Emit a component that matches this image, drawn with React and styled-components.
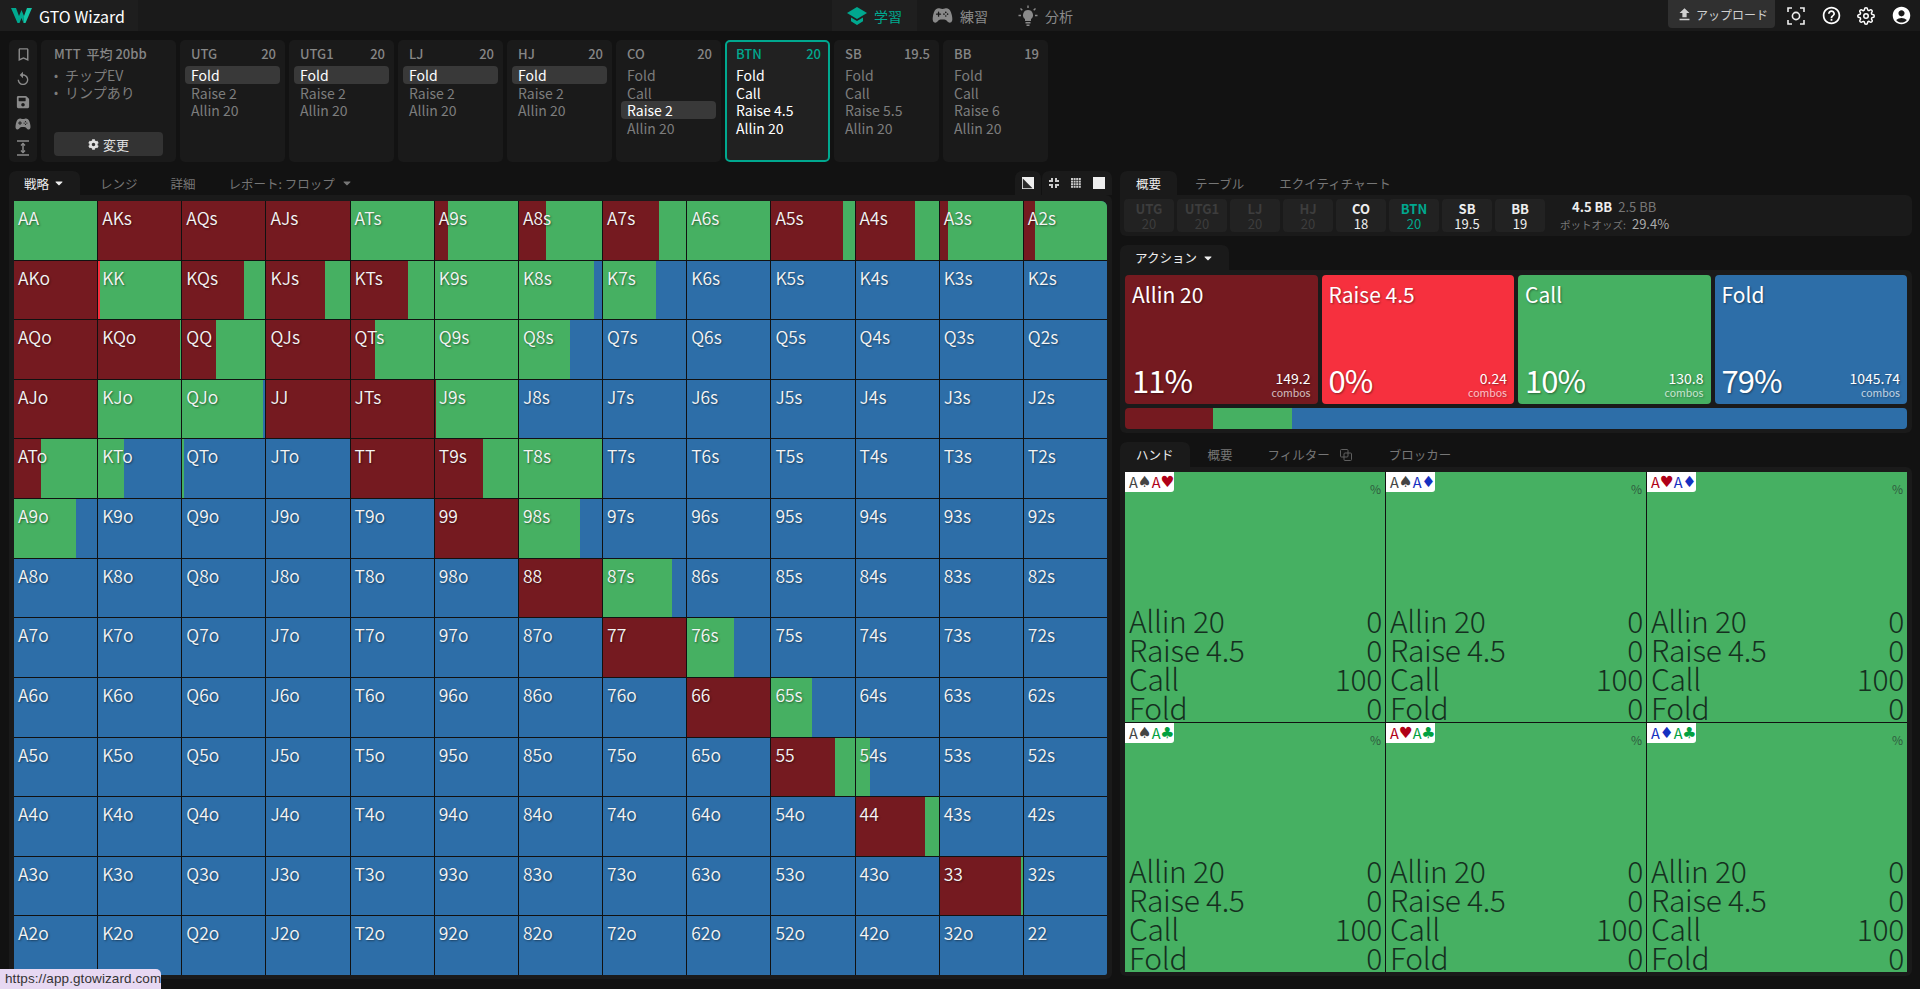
import React from 'react';
import styled, { createGlobalStyle } from 'styled-components';
import { FaCog, FaSave, FaCaretDown } from 'react-icons/fa';
import { IoGameController } from 'react-icons/io5';
import { MdAccountCircle, MdFileUpload, MdHelpOutline, MdReplay, MdOutlineBookmarkBorder } from 'react-icons/md';
import { FiSettings } from 'react-icons/fi';

const FONT = '"Noto Sans CJK JP", "Noto Sans", sans-serif';
const TEAL = '#00a88f';
const ALLIN = '#751a20';
const RAISE = '#f6303e';
const CALL = '#46b062';
const FOLD = '#2d6ea8';

const GlobalStyle = createGlobalStyle`
  html, body {
    margin: 0;
    background: #121212;
    font-family: ${FONT};
    overflow: hidden;
  }
  * {
    box-sizing: border-box;
  }
`

const Page = styled.div`
  height: 989px;
  width: 1920px;
  position: relative;
  overflow: hidden;
  color: #fff;
`

const TopBar = styled.header`
  align-items: stretch;
  background: #1a1a1a;
  display: grid;
  grid-template-columns: 1fr auto 1fr;
  height: 31px;
`

const LogoTab = styled.div`
  align-items: center;
  background: #1e1e1e;
  display: flex;
  font-size: 16px;
  gap: 7px;
  padding-left: 11px;
  width: 138px;
`

const Nav = styled.nav`
  display: flex;
`

const NavItem = styled.div`
  align-items: center;
  background: ${p => (p.$active ? '#1f1f1f' : 'transparent')};
  color: ${p => (p.$active ? TEAL : '#8a8a8a')};
  display: flex;
  font-size: 14px;
  gap: 7px;
  padding: 0 15px;
  svg {
    font-size: 21px;
  }
`

const TopRight = styled.div`
  align-items: flex-start;
  display: flex;
  gap: 15.5px;
  justify-content: flex-end;
  padding-right: 8.5px;
  > svg {
    align-self: center;
    font-size: 18px;
  }
`

const UploadButton = styled.div`
  align-items: center;
  background: #303030;
  border-radius: 0 0 4px 4px;
  color: #cfcfcf;
  display: flex;
  font-size: 12px;
  gap: 3px;
  height: 28px;
  margin-right: -3.5px;
  padding: 0 8px;
  width: 107px;
  white-space: nowrap;
  svg {
    flex-shrink: 0;
  }
`

const SpotRow = styled.section`
  display: flex;
  gap: 4px;
  height: 122px;
  margin-top: 9px;
  padding-left: 9px;
`

const IconColumn = styled.div`
  align-items: center;
  background: #1a1a1a;
  border-radius: 5px;
  color: #8a8a8a;
  display: flex;
  flex-direction: column;
  font-size: 14px;
  justify-content: space-between;
  padding: 6px 0;
  width: 28px;
`

const SpotCard = styled.div`
  background: ${p => (p.$current ? '#212121' : '#1a1a1a')};
  border: ${p => (p.$current ? `2px solid ${TEAL}` : '2px solid transparent')};
  border-radius: 5px;
  padding: 2px 3px 0;
  width: ${p => p.$width || 105}px;
  display: flex;
  flex-direction: column;
`

const SpotHeader = styled.div`
  color: ${p => (p.$current ? TEAL : '#868686')};
  display: flex;
  font-size: 13px;
  font-weight: 500;
  height: 20px;
  justify-content: space-between;
  line-height: 20px;
  margin-bottom: 2px;
  padding: 0 4px 0 6px;
`

const SpotAction = styled.div`
  background: ${p => (p.$selected ? '#393939' : 'transparent')};
  border-radius: 4px;
  color: ${p => (p.$selected || p.$current ? '#fff' : '#7d7d7d')};
  font-size: 14px;
  height: 18px;
  line-height: 18px;
  padding-left: 6px;
  margin-bottom: -0.4px;
`

const InfoCard = styled(SpotCard)`
  padding: 2px 11px 4px 11px;
`

const InfoTitle = styled.div`
  color: #868686;
  font-size: 13px;
  font-weight: 500;
  height: 20px;
  line-height: 20px;
  margin-bottom: 2px;
  white-space: pre;
`

const InfoLine = styled.div`
  color: #7d7d7d;
  display: flex;
  font-size: 14px;
  gap: 7px;
  height: 17px;
  line-height: 18px;
  &::before {
    content: '•';
    font-size: 12px;
  }
`

const ChangeButton = styled.div`
  align-items: center;
  background: #333;
  border-radius: 4px;
  color: #e0e0e0;
  display: flex;
  font-size: 13px;
  gap: 4px;
  height: 24px;
  justify-content: center;
  margin-top: auto;
`

const Main = styled.main`
  display: flex;
  gap: 8px;
  margin-top: 9px;
  padding-left: 9px;
`

const LeftColumn = styled.div`
  display: flex;
  flex-direction: column;
  width: 1103px;
`

const RightColumn = styled.div`
  display: flex;
  flex-direction: column;
  width: 792px;
`

const TabRow = styled.div`
  align-items: stretch;
  display: flex;
  height: ${p => p.$height || 24}px;
  flex-shrink: 0;
`

const Tab = styled.div`
  align-items: center;
  background: ${p => (p.$active ? '#1a1a1a' : 'transparent')};
  border-radius: 7px 7px 0 0;
  color: ${p => (p.$active ? '#eee' : '#767676')};
  display: flex;
  font-size: 12.5px;
  gap: ${p => p.$gap || 5}px;
  padding: 0 ${p => p.$pad || 15}px;
  svg {
    font-size: 12px;
  }
`

const ViewTools = styled.div`
  display: flex;
  gap: 1px;
  margin-left: auto;
`

const ToolGroup = styled.div`
  align-items: center;
  background: #1a1a1a;
  border-radius: 7px 7px 0 0;
  display: flex;
  gap: 12px;
  padding: 0 7px;
`

const Panel = styled.div`
  background: #1a1a1a;
  border-radius: 0 6px 6px 6px;
  padding: ${p => p.$pad || '5px'};
  margin-bottom: ${p => p.$gap || 0}px;
`

const RangeGrid = styled.div`
  background: #111;
  display: grid;
  gap: 1px;
  grid-template-columns: repeat(13, 1fr);
  grid-template-rows: repeat(13, 1fr);
  height: 774px;
  border-radius: 0 6px 2px 2px;
  overflow: hidden;
`

const Cell = styled.div`
  background: ${FOLD};
  display: flex;
  overflow: hidden;
  position: relative;
`

const Segment = styled.div`
  background: ${p => p.$color};
  height: 100%;
`

const CellLabel = styled.span`
  color: #f4f4f4;
  font-size: 17.5px;
  font-weight: 350;
  left: 4px;
  line-height: 22px;
  position: absolute;
  text-shadow: 1px 1px 2px rgba(0, 0, 0, 0.45);
  top: 6px;
`

const PositionRow = styled.div`
  align-items: center;
  display: flex;
  gap: 3px;
`

const PositionChip = styled.div`
  align-items: center;
  background: #222;
  border-radius: 4px;
  color: ${p => (p.$current ? TEAL : p.$dim ? '#3d3d3d' : '#eee')};
  display: flex;
  flex-direction: column;
  font-size: 13px;
  height: 33px;
  justify-content: center;
  line-height: 15px;
  width: 50px;
  b {
    font-weight: 700;
  }
`

const PotInfo = styled.div`
  display: flex;
  flex-direction: column;
  font-size: 13px;
  line-height: 15px;
  margin-left: 12px;
  gap: 2px;
`

const PotLine = styled.div`
  align-items: baseline;
  display: flex;
  gap: 6px;
  padding-left: ${p => p.$indent || 0}px;
  color: ${p => p.$color || '#eee'};
`

const PotMuted = styled.span`
  color: #777;
`

const PotLabel = styled.span`
  color: #777;
  font-size: 10.5px;
`

const ActionCards = styled.div`
  display: grid;
  gap: 4px;
  grid-template-columns: repeat(4, 1fr);
`

const ActionCard = styled.div`
  background: ${p => p.$color};
  border-radius: 4px;
  display: flex;
  flex-direction: column;
  height: 129px;
  justify-content: space-between;
  padding: 2px 7px 4px 7px;
  text-shadow: 1px 1px 2px rgba(0, 0, 0, 0.4);
`

const ActionTitle = styled.div`
  font-size: 21px;
  line-height: 34px;
`

const ActionBottom = styled.div`
  align-items: flex-end;
  display: flex;
  justify-content: space-between;
`

const ActionPercent = styled.div`
  font-size: 31px;
  letter-spacing: -1px;
  line-height: 40px;
`

const ActionCombos = styled.div`
  font-size: 14px;
  line-height: 15px;
  text-align: right;
  small {
    display: block;
    font-size: 10.5px;
    opacity: 0.7;
    line-height: 14px;
  }
`

const StackBar = styled.div`
  border-radius: 4px;
  display: flex;
  height: 21px;
  margin-top: 4px;
  overflow: hidden;
`

const HandGrid = styled.div`
  background: #111;
  display: grid;
  gap: 1px;
  grid-template-columns: repeat(3, 1fr);
  grid-template-rows: repeat(2, 1fr);
  height: 500px;
`

const HandCell = styled.div`
  background: ${CALL};
  color: #15301f;
  display: flex;
  flex-direction: column;
  justify-content: flex-end;
  padding: 0 3px 0 4px;
  position: relative;
`

const HandBadge = styled.div`
  background: #fff;
  border-radius: 0 0 3px 0;
  display: flex;
  font-size: 14.5px;
  height: 20px;
  left: 0;
  line-height: 20px;
  padding-left: 4px;
  position: absolute;
  top: 0;
  width: 49px;
`

const CardRank = styled.span`
  color: ${p => p.$color};
`

const CardSuit = styled.span`
  color: ${p => p.$color};
  font-family: "DejaVu Sans", sans-serif;
  font-size: 15.5px;
`

const PercentMark = styled.span`
  color: #2f5a3e;
  font-size: 12px;
  position: absolute;
  right: 4px;
  top: 8px;
`

const StatRow = styled.div`
  display: flex;
  font-size: 30px;
  font-weight: 300;
  height: 29px;
  justify-content: space-between;
  letter-spacing: -0.3px;
  line-height: 29px;
`

const StatusTip = styled.div`
  background: #e7d8f2;
  border-radius: 0 5px 0 0;
  bottom: 0;
  color: #333;
  font-family: "Liberation Sans", sans-serif;
  font-size: 13.5px;
  height: 20px;
  left: 0;
  letter-spacing: 0.1px;
  line-height: 20px;
  padding-left: 5px;
  position: absolute;
  width: 161px;
`

// mix = allin, raise, call, fold
const COLORS = [ALLIN, RAISE, CALL, FOLD];
const RANKS = ['A', 'K', 'Q', 'J', 'T', '9', '8', '7', '6', '5', '4', '3', '2'];

const MIXES = {
  AA: [0, 0, 100, 0], AKs: [100], AQs: [100], AJs: [100], ATs: [1, 0, 99, 0], A9s: [16, 0, 84, 0],
  A8s: [33, 0, 67, 0], A7s: [67, 0, 33, 0], A6s: [0, 0, 100, 0], A5s: [86, 0, 14, 0], A4s: [72, 0, 28, 0],
  A3s: [10, 0, 90, 0], A2s: [14, 0, 86, 0],
  AKo: [100], KK: [0, 2, 98, 0], KQs: [74, 0, 26, 0], KJs: [70, 0, 30, 0], KTs: [69, 0, 31, 0], K9s: [0, 0, 100, 0],
  K8s: [0, 0, 90, 10], K7s: [0, 0, 64, 36],
  AQo: [100], KQo: [98, 0, 2, 0], QQ: [41, 0, 59, 0], QJs: [100], QTs: [29, 0, 71, 0], Q9s: [0, 0, 100, 0], Q8s: [0, 0, 62, 38],
  AJo: [100], KJo: [0, 0, 100, 0], QJo: [0, 0, 97, 3], JJ: [100], JTs: [100], J9s: [2, 0, 98, 0],
  ATo: [32, 0, 68, 0], KTo: [0, 0, 31, 69], QTo: [0, 0, 2, 98], TT: [100], T9s: [58, 0, 42, 0], T8s: [0, 0, 100, 0],
  A9o: [0, 0, 74, 26], 99: [100], '98s': [0, 0, 74, 26],
  88: [100], '87s': [0, 0, 83, 17],
  77: [100], '76s': [0, 0, 56, 44],
  66: [100], '65s': [0, 0, 49, 51],
  55: [77, 0, 23, 0], '54s': [0, 0, 18, 82],
  44: [84, 0, 16, 0],
  33: [98, 0, 2, 0],
};

const handName = (row, col) => {
  if (row === col) return RANKS[row] + RANKS[col];
  return row < col ? RANKS[row] + RANKS[col] + 's' : RANKS[col] + RANKS[row] + 'o';
};

const SPOTS = [
  { pos: 'UTG', stack: '20', actions: ['Fold', 'Raise 2', 'Allin 20'], selected: 0 },
  { pos: 'UTG1', stack: '20', actions: ['Fold', 'Raise 2', 'Allin 20'], selected: 0 },
  { pos: 'LJ', stack: '20', actions: ['Fold', 'Raise 2', 'Allin 20'], selected: 0 },
  { pos: 'HJ', stack: '20', actions: ['Fold', 'Raise 2', 'Allin 20'], selected: 0 },
  { pos: 'CO', stack: '20', actions: ['Fold', 'Call', 'Raise 2', 'Allin 20'], selected: 2 },
  { pos: 'BTN', stack: '20', actions: ['Fold', 'Call', 'Raise 4.5', 'Allin 20'], current: true },
  { pos: 'SB', stack: '19.5', actions: ['Fold', 'Call', 'Raise 5.5', 'Allin 20'] },
  { pos: 'BB', stack: '19', actions: ['Fold', 'Call', 'Raise 6', 'Allin 20'] },
];

const POSITIONS = [
  { pos: 'UTG', stack: '20', dim: true },
  { pos: 'UTG1', stack: '20', dim: true },
  { pos: 'LJ', stack: '20', dim: true },
  { pos: 'HJ', stack: '20', dim: true },
  { pos: 'CO', stack: '18' },
  { pos: 'BTN', stack: '20', current: true },
  { pos: 'SB', stack: '19.5' },
  { pos: 'BB', stack: '19' },
];

const ACTIONS = [
  { title: 'Allin 20', pct: '11%', combos: '149.2', color: ALLIN },
  { title: 'Raise 4.5', pct: '0%', combos: '0.24', color: RAISE },
  { title: 'Call', pct: '10%', combos: '130.8', color: CALL },
  { title: 'Fold', pct: '79%', combos: '1045.74', color: FOLD },
];

const SUITS = {
  s: { glyph: '♠', color: '#444' },
  h: { glyph: '♥', color: '#b00018' },
  d: { glyph: '♦', color: '#1430c0' },
  c: { glyph: '♣', color: '#00a040' },
};

const HANDS = [['s', 'h'], ['s', 'd'], ['h', 'd'], ['s', 'c'], ['h', 'c'], ['d', 'c']];
const STATS = [['Allin 20', '0'], ['Raise 4.5', '0'], ['Call', '100'], ['Fold', '0']];

const Logo = () => (
  <svg width="21" height="15" viewBox="0 0 21 15">
    <path d="M0 0h5l3 8 2.5-6L13 8l-.5 7-2-5-2 5h-2z" fill={TEAL} />
    <path d="M16 0h5l-6.500 15h-2l.5-7z" fill="#14c4a6" />
  </svg>
);

const CapIcon = () => (
  <svg width="20" height="18" viewBox="0 0 20 18" fill={TEAL}>
    <path d="M10 0l10 6-10 6L0 6z" />
    <path d="M4 10.500l6 3.600 6-3.600v3.800L10 18l-6-3.700z" />
  </svg>
);

const BulbIcon = () => (
  <svg width="20" height="22" viewBox="0 0 20 22" fill="#8a8a8a">
    <path d="M10 5a5 5 0 0 0-3 9v2h6v-2a5 5 0 0 0-3-9zM7.500 17h5v1.500h-5zM8.500 19.500h3V21h-3z" />
    <path d="M10 0.500v2.500M2.500 3.500l1.800 1.800M17.500 3.500l-1.800 1.800M0.500 10.500H3M17 10.500h2.500" stroke="#8a8a8a" strokeWidth="1.400" />
  </svg>
);

const FocusIcon = () => (
  <svg width="18" height="18" viewBox="0 0 18 18" fill="none" stroke="#eee" strokeWidth="1.600">
    <path d="M1 5V1h4M13 1h4v4M17 13v4h-4M5 17H1v-4" />
    <circle cx="9" cy="9" r="3.600" />
  </svg>
);

const HeightIcon = () => (
  <svg width="14" height="16" viewBox="0 0 14 16" fill="none" stroke="#8a8a8a" strokeWidth="1.500">
    <path d="M1 1h12M1 15h12M7 3.500v9" />
    <path d="M5 5.500l2-2 2 2M5 10.500l2 2 2-2" />
  </svg>
);

const HalfIcon = () => (
  <svg width="12" height="12" viewBox="0 0 12 12">
    <rect width="12" height="12" fill="#eee" />
    <path d="M0.800 1.500v9.700h9.700z" fill="#2a2a2a" />
  </svg>
);

const CornerDotsIcon = () => (
  <svg width="10" height="10" viewBox="0 0 10 10" fill="#ccc">
    <path d="M0 2h2V0h2v4H0zM6 0h2v2h2v2H6zM0 6h4v4H2V8H0zM6 6h4v2H8v2H6z" />
  </svg>
);

const DotsIcon = () => (
  <svg width="10" height="10" viewBox="0 0 10 10" fill="#ccc">
    {[0, 1, 2, 3].map(r => [0, 1, 2, 3].map(c => (
      <rect key={`${r}${c}`} x={c * 2.600} y={r * 2.600} width="2" height="2" />
    )))}
  </svg>
);

const SquareIcon = () => (
  <svg width="12" height="12" viewBox="0 0 12 12">
    <rect width="12" height="12" fill="#eee" />
  </svg>
);

const CopyIcon = () => (
  <svg width="12" height="12" viewBox="0 0 12 12" fill="none" stroke="#5f5f5f" strokeWidth="1">
    <rect x="0.500" y="0.500" width="7.500" height="7.500" rx="1" />
    <rect x="4" y="4" width="7.500" height="7.500" rx="1" />
  </svg>
);

const Spot = ({ spot }) => (
  <SpotCard $current={spot.current}>
    <SpotHeader $current={spot.current}>
      <span>{spot.pos}</span>
      <span>{spot.stack}</span>
    </SpotHeader>
    {spot.actions.map((action, i) => (
      <SpotAction key={action} $selected={spot.selected === i} $current={spot.current}>{action}</SpotAction>
    ))}
  </SpotCard>
);

const Hand = ({ suits }) => (
  <HandCell>
    <HandBadge>
      {suits.map(s => (
        <React.Fragment key={s}>
          <CardRank $color={SUITS[s].color}>A</CardRank>
          <CardSuit $color={SUITS[s].color}>{SUITS[s].glyph}</CardSuit>
        </React.Fragment>
      ))}
    </HandBadge>
    <PercentMark>%</PercentMark>
    {STATS.map(([label, value]) => (
      <StatRow key={label}>
        <span>{label}</span>
        <span>{value}</span>
      </StatRow>
    ))}
  </HandCell>
);

const App = () => (
  <Page>
    <GlobalStyle />
    <TopBar>
      <LogoTab><Logo /> GTO Wizard</LogoTab>
      <Nav>
        <NavItem $active><CapIcon /> 学習</NavItem>
        <NavItem><IoGameController /> 練習</NavItem>
        <NavItem><BulbIcon /> 分析</NavItem>
      </Nav>
      <TopRight>
        <UploadButton><MdFileUpload size={17} /> アップロード</UploadButton>
        <FocusIcon />
        <MdHelpOutline style={{ fontSize: 21 }} />
        <FiSettings />
        <MdAccountCircle style={{ fontSize: 21 }} />
      </TopRight>
    </TopBar>

    <SpotRow>
      <IconColumn>
        <MdOutlineBookmarkBorder size={17} />
        <MdReplay size={16} />
        <FaSave />
        <IoGameController size={16} />
        <HeightIcon />
      </IconColumn>
      <InfoCard $width={135}>
        <InfoTitle>MTT  平均 20bb</InfoTitle>
        <InfoLine>チップEV</InfoLine>
        <InfoLine>リンプあり</InfoLine>
        <ChangeButton><FaCog size={11} /> 変更</ChangeButton>
      </InfoCard>
      {SPOTS.map(spot => <Spot key={spot.pos} spot={spot} />)}
    </SpotRow>

    <Main>
      <LeftColumn>
        <TabRow>
          <Tab $active $gap={4}>戦略 <FaCaretDown /></Tab>
          <Tab $pad={20}>レンジ</Tab>
          <Tab $pad={13}>詳細</Tab>
          <Tab $pad={20} $gap={6}>レポート: フロップ <FaCaretDown /></Tab>
          <ViewTools>
            <ToolGroup><HalfIcon /></ToolGroup>
            <ToolGroup><CornerDotsIcon /><DotsIcon /><SquareIcon /></ToolGroup>
          </ViewTools>
        </TabRow>
        <Panel $pad="6px 5px 4px">
          <RangeGrid>
            {RANKS.map((_, row) => RANKS.map((__, col) => {
              const name = handName(row, col);
              const mix = MIXES[name] || [0, 0, 0, 100];
              return (
                <Cell key={name}>
                  {mix.map((pct, i) => (pct > 0 ? (
                    <Segment key={i} $color={COLORS[i]} style={{ width: `${pct}%` }} />
                  ) : null))}
                  <CellLabel>{name}</CellLabel>
                </Cell>
              );
            }))}
          </RangeGrid>
        </Panel>
      </LeftColumn>

      <RightColumn>
        <TabRow>
          <Tab $active $pad={16}>概要</Tab>
          <Tab $pad={18}>テーブル</Tab>
          <Tab $pad={17}>エクイティチャート</Tab>
        </TabRow>
        <Panel $pad="4px" $gap={9}>
          <PositionRow>
            {POSITIONS.map(p => (
              <PositionChip key={p.pos} $dim={p.dim} $current={p.current}>
                <b>{p.pos}</b>
                <span>{p.stack}</span>
              </PositionChip>
            ))}
            <PotInfo>
              <PotLine $indent={12}>
                <b>4.5 BB</b>
                <PotMuted>2.5 BB</PotMuted>
              </PotLine>
              <PotLine $color="#aaa">
                <PotLabel>ポットオッズ:</PotLabel>
                <span>29.4%</span>
              </PotLine>
            </PotInfo>
          </PositionRow>
        </Panel>

        <TabRow $height={25}>
          <Tab $active>アクション <FaCaretDown /></Tab>
        </TabRow>
        <Panel $pad="5px 5px 4px" $gap={9}>
          <ActionCards>
            {ACTIONS.map(a => (
              <ActionCard key={a.title} $color={a.color}>
                <ActionTitle>{a.title}</ActionTitle>
                <ActionBottom>
                  <ActionPercent>{a.pct}</ActionPercent>
                  <ActionCombos>{a.combos}<small>combos</small></ActionCombos>
                </ActionBottom>
              </ActionCard>
            ))}
          </ActionCards>
          <StackBar>
            <Segment $color={ALLIN} style={{ width: '11.3%' }} />
            <Segment $color={CALL} style={{ width: '10%' }} />
            <Segment $color={FOLD} style={{ width: '78.7%' }} />
          </StackBar>
        </Panel>

        <TabRow $height={25}>
          <Tab $active $pad={16}>ハンド</Tab>
          <Tab $pad={18}>概要</Tab>
          <Tab $pad={17} $gap={10}>フィルター <CopyIcon /></Tab>
          <Tab $pad={20}>ブロッカー</Tab>
        </TabRow>
        <Panel $pad="5px 5px 4px">
          <HandGrid>
            {HANDS.map(suits => <Hand key={suits.join('')} suits={suits} />)}
          </HandGrid>
        </Panel>
      </RightColumn>
    </Main>

    <StatusTip>https://app.gtowizard.com</StatusTip>
  </Page>
);

export default App;
